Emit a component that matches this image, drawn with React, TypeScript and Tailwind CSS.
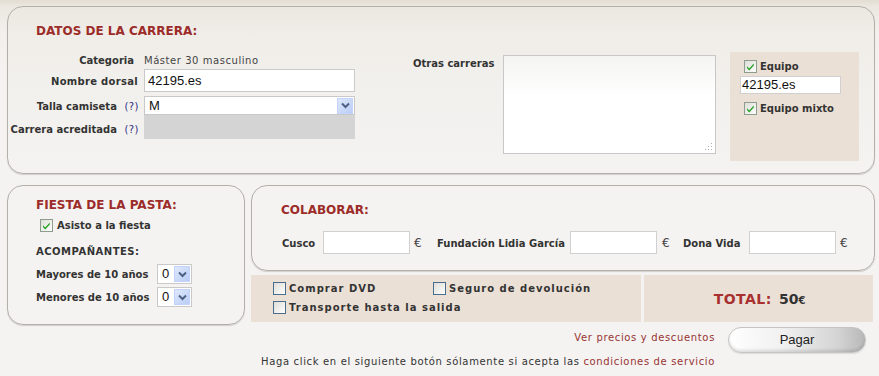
import React from "react";

const CheckBox = ({ checked = false }: { checked?: boolean }) => (
  <svg width="13" height="13" viewBox="0 0 13 13" className="shrink-0 block">
    <defs>
      <linearGradient id={checked ? "cbg1" : "cbg2"} x1="0" y1="0" x2="1" y2="1">
        <stop offset="0" stopColor="#dcdcd7" />
        <stop offset="1" stopColor="#ffffff" />
      </linearGradient>
    </defs>
    <rect x="0.5" y="0.5" width="12" height="12" fill={`url(#${checked ? "cbg1" : "cbg2"})`} stroke={checked ? "#8e9c8e" : "#4a6d8c"} />
    {checked && (
      <path d="M3 6.2 L5.2 8.6 L9.8 3.6 L9.8 5.4 L5.2 10.4 L3 8 Z" fill="#21a121" />
    )}
  </svg>
);

const SelectArrow = () => (
  <div className="w-[16px] h-[16px] bg-[linear-gradient(135deg,#dfe8fb,#b9cdf5)] border border-[#c3d3fd] flex items-center justify-center">
    <svg width="9" height="7" viewBox="0 0 9 7">
      <path d="M1 1.5 L4.5 5 L8 1.5" stroke="#4d6185" strokeWidth="2" fill="none" />
    </svg>
  </div>
);

const Title = ({ children, className = "" }: { children: React.ReactNode; className?: string }) => (
  <div className={`text-[12px] font-bold leading-[16px] text-[#9c2c2a] ${className}`}>{children}</div>
);

const inputFont = "font-['Liberation_Sans',Arial,sans-serif]";

export default function App() {
  return (
    <div className="w-[879px] h-[376px] overflow-hidden bg-[linear-gradient(to_bottom,#e3ddd2_0px,#ebe7e0_6px,#f2f0ec_30px,#f4f3f1_80px)] font-['DejaVu_Sans',Verdana,sans-serif] text-[#333] pt-[6px] pl-[7px]">
      {/* Panel 1 */}
      <div className="w-[868px] h-[168px] rounded-[16px] border border-[#b3afa9] shadow-[0_1px_1px_rgba(0,0,0,0.15)] bg-[linear-gradient(to_bottom,rgba(236,232,225,0.5),rgba(244,243,241,0.2))]">
        <Title className="pl-[28px] pt-[16px]">DATOS DE LA CARRERA:</Title>
        <div className="mt-[13px] flex items-start">
          {/* form */}
          <div className="w-[347px] flex flex-col text-[10px]">
            <div className="flex items-center h-[16px]">
              <div className="w-[131px] text-right pr-[5px] font-bold">Categoria</div>
              <div className="ml-[5px] tracking-[0.55px] text-[#444]">Máster 30 masculino</div>
            </div>
            <div className="flex items-center h-[23px] mt-[1px]">
              <div className="w-[131px] text-right pr-[1px] font-bold tracking-[0.3px] pt-[2px]">Nombre dorsal</div>
              <div className={`ml-[5px] w-[211px] h-[23px] bg-white border border-[#c9c9c9] pl-[3px] flex items-center text-[13px] text-[#111] ${inputFont}`}>42195.es</div>
            </div>
            <div className="flex items-start h-[19px] mt-[4px]">
              <div className="w-[131px] text-right font-bold whitespace-nowrap mt-[5px] leading-[12px]">
                Talla camiseta <span className="font-normal text-[#2d2d84] ml-[4px] tracking-[0.5px]">(?)</span>
              </div>
              <div className={`ml-[5px] w-[211px] h-[19px] bg-white border border-[#c9c9c9] pl-[4px] pr-[1px] flex items-center justify-between text-[13px] text-[#111] ${inputFont}`}>
                <span>M</span>
                <SelectArrow />
              </div>
            </div>
            <div className="flex items-start h-[24px]">
              <div className="w-[131px] text-right font-bold whitespace-nowrap mt-[9px] leading-[12px]">
                Carrera acreditada <span className="font-normal text-[#2d2d84] ml-[4px] tracking-[0.5px]">(?)</span>
              </div>
              <div className="ml-[5px] w-[211px] h-[24px] bg-[#d4d4d4]" />
            </div>
          </div>
          {/* otras carreras */}
          <div className="ml-[58px] w-[90px] mt-[4px] text-[10px] font-bold">Otras carreras</div>
          <div className="mt-[3px] w-[213px] h-[99px] bg-[linear-gradient(to_bottom,#f4f4f2,#ffffff_40%)] border border-[#c7c7c7] relative">
            <svg width="10" height="10" viewBox="0 0 10 10" className="absolute right-[2px] bottom-[2px]">
              <g fill="#b0b0b0">
                <rect x="8" y="2" width="1" height="1" />
                <rect x="5" y="5" width="1" height="1" />
                <rect x="8" y="5" width="1" height="1" />
                <rect x="2" y="8" width="1" height="1" />
                <rect x="5" y="8" width="1" height="1" />
                <rect x="8" y="8" width="1" height="1" />
              </g>
            </svg>
          </div>
          {/* equipo */}
          <div className="ml-[14px] w-[129px] h-[109px] bg-[#ebe0d6] text-[10px] font-bold">
            <div className="flex items-center pl-[14px] pt-[7px] gap-[3px]">
              <CheckBox checked />
              <span>Equipo</span>
            </div>
            <div className={`ml-[10px] mt-[2px] w-[101px] h-[18px] bg-white border border-[#d0d0d0] pl-[1px] flex items-center text-[13px] font-normal text-[#111] ${inputFont}`}>42195.es</div>
            <div className="flex items-center pl-[14px] mt-[7px] gap-[3px]">
              <CheckBox checked />
              <span>Equipo mixto</span>
            </div>
          </div>
        </div>
      </div>

      {/* Row 2 */}
      <div className="mt-[11px] flex gap-[6px]">
        {/* Panel 2 */}
        <div className="w-[238px] h-[140px] rounded-[16px] border border-[#b3afa9] shadow-[0_1px_1px_rgba(0,0,0,0.15)] text-[10px]">
          <Title className="pl-[28px] pt-[11px]">FIESTA DE LA PASTA:</Title>
          <div className="flex items-center pl-[32px] mt-[5px] gap-[4px] font-bold">
            <CheckBox checked />
            <span>Asisto a la fiesta</span>
          </div>
          <div className="pl-[28px] mt-[12px] font-bold leading-[14px] tracking-[0.5px]">ACOMPAÑANTES:</div>
          <div className="flex items-center pl-[28px] mt-[5px] h-[20px]">
            <div className="w-[121px] font-bold">Mayores de 10 años</div>
            <div className={`w-[35px] h-[20px] bg-white border border-[#c9c9c9] pl-[4px] pr-[1px] flex items-center justify-between text-[13px] text-[#111] font-normal ${inputFont}`}>
              <span>0</span>
              <SelectArrow />
            </div>
          </div>
          <div className="flex items-center pl-[28px] mt-[3px] h-[20px]">
            <div className="w-[121px] font-bold">Menores de 10 años</div>
            <div className={`w-[35px] h-[20px] bg-white border border-[#c9c9c9] pl-[4px] pr-[1px] flex items-center justify-between text-[13px] text-[#111] font-normal ${inputFont}`}>
              <span>0</span>
              <SelectArrow />
            </div>
          </div>
        </div>

        {/* right column */}
        <div className="w-[624px] flex flex-col">
          <div className="h-[86px] rounded-[16px] border border-[#b3afa9] shadow-[0_1px_1px_rgba(0,0,0,0.15)] text-[10px]">
            <Title className="pl-[29px] pt-[16px]">COLABORAR:</Title>
            <div className="mt-[13px] flex items-center pl-[30px] font-bold">
              <div className="w-[41px] pt-[2px]">Cusco</div>
              <div className="w-[87px] h-[23px] bg-white border border-[#d0d0d0]" />
              <div className="w-[27px] pl-[4px] font-normal text-[12px] text-[#444]">€</div>
              <div className="w-[133px] pt-[2px]">Fundación Lidia García</div>
              <div className="w-[87px] h-[23px] bg-white border border-[#d0d0d0]" />
              <div className="w-[26px] pl-[5px] font-normal text-[12px] text-[#444]">€</div>
              <div className="w-[66px] pt-[2px]">Dona Vida</div>
              <div className="w-[87px] h-[23px] bg-white border border-[#d0d0d0]" />
              <div className="pl-[4px] font-normal text-[12px] text-[#444]">€</div>
            </div>
          </div>
          <div className="mt-[4px] flex gap-[3px]">
            <div className="w-[390px] h-[47px] bg-[#ebe0d6] pl-[22px] pt-[7px] text-[10px] font-bold tracking-[1px]">
              <div className="flex items-center h-[13px]">
                <div className="w-[160px] flex items-center gap-[3px]">
                  <CheckBox />
                  <span>Comprar DVD</span>
                </div>
                <div className="flex items-center gap-[3px]">
                  <CheckBox />
                  <span>Seguro de devolución</span>
                </div>
              </div>
              <div className="flex items-center h-[13px] mt-[6px] gap-[3px]">
                <CheckBox />
                <span>Transporte hasta la salida</span>
              </div>
            </div>
            <div className="w-[229px] h-[47px] bg-[#ebe0d6] flex items-center justify-center pl-[2px] pt-[1px]">
              <span className="text-[14px] font-bold text-[#a8302e] tracking-[0.5px]">TOTAL:</span>
              <span className="ml-[7px] text-[14px] font-bold text-[#333]">50</span>
              <span className="text-[10px] font-bold text-[#333] mt-[2px]">€</span>
            </div>
          </div>
          <div className="flex">
            <div className="w-[464px] flex flex-col items-end text-[10px] tracking-[0.65px]">
              <div className="mt-[9px] leading-[14px] text-[#993333]">Ver precios y descuentos</div>
              <div className="mt-[10px] leading-[14px] text-[#333] whitespace-nowrap">
                Haga click en el siguiente botón sólamente si acepta las <span className="text-[#993333]">condiciones de servicio</span>
              </div>
            </div>
            <div className={`ml-[13px] mt-[5px] w-[138px] h-[26px] rounded-full border border-[#c4c4c4] bg-[linear-gradient(to_right,#ffffff_0%,#f0f0f0_40%,#d4d4d4_80%,#b8b8b8_100%)] shadow-[inset_0_-2px_3px_rgba(0,0,0,0.12),0_1px_1px_rgba(0,0,0,0.1)] flex items-center justify-center text-[13px] text-[#222] ${inputFont}`}>
              Pagar
            </div>
          </div>
        </div>
      </div>
    </div>
  );
}
